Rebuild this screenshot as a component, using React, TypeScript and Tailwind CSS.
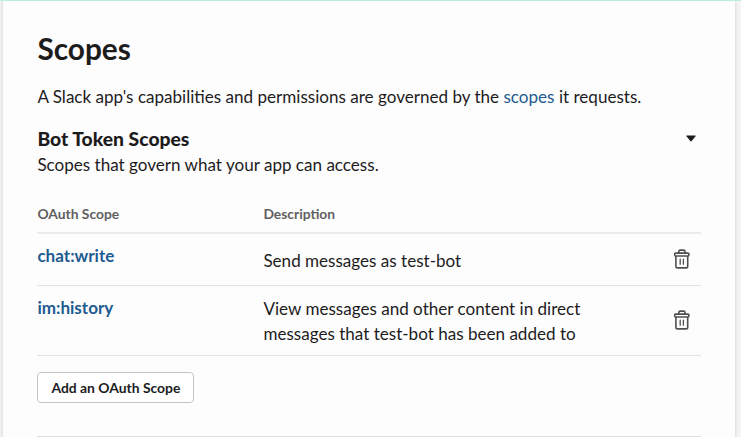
const scopes = [
  { name: "chat:write", lines: ["Send messages as test-bot"], row: "h-[52px]", cell: "pt-[13.5px] leading-[26px]" },
  {
    name: "im:history",
    lines: ["View messages and other content in direct", "messages that test-bot has been added to"],
    row: "h-[70px]",
    cell: "pt-[10px] leading-[25px]",
  },
];

function TrashIcon() {
  return (
    <svg width="18" height="20" viewBox="0 0 18 20" fill="none" stroke="#4f4f50" strokeWidth="1.6" strokeLinejoin="round">
      <path d="M5.8 3.9V2.6Q5.8 1.1 7.1 1.1h3.6Q12 1.1 12 2.6v1.3" />
      <rect x="1.7" y="4.1" width="14.2" height="2.9" rx="0.9" />
      <path d="M2.9 7v10.2q0 1.7 1.7 1.7h8.4q1.7 0 1.7-1.7V7" />
      <path d="M7.2 10.2v5M10.4 10.2v5" strokeWidth="1.3" strokeLinecap="round" />
    </svg>
  );
}

export default function App() {
  return (
    <div className="flex h-[437px] w-[741px] flex-col overflow-hidden border-t border-[#bdebdd] bg-[#f5f5f5] pl-[2px] pr-[5px] font-['Lato',sans-serif] text-[#1d1c1d]">
      <main className="flex-1 border-x border-[#e4e4e4] bg-[#fdfdfd] pl-[34.4px] pr-[34px] shadow-sm">
        <h1 className="mt-[28px] h-[40px] text-[29.8px] leading-[40px] font-bold">Scopes</h1>
        <p className="mt-[15px] h-[26px] whitespace-nowrap text-[17.07px] leading-[26px]">
          A Slack app's capabilities and permissions are governed by the <a className="text-[#1d5b91]">scopes</a> it requests.
        </p>
        <div className="mt-[16px] flex h-[26px] items-center justify-between pr-[5.5px]">
          <h2 className="text-[19.3px] leading-[26px] font-black">Bot Token Scopes</h2>
          <svg className="-mt-[2px]" width="10" height="7" viewBox="0 0 10 7"><path d="M.8.5h8.4q.8 0 .3.7L5.7 5.9Q5 6.7 4.3 5.9L.5 1.2Q0 .5.8.5Z" fill="#1d1c1d" /></svg>
        </div>
        <p className="h-[26px] text-[17.07px] leading-[26px]">Scopes that govern what your app can access.</p>
        <div className="mt-[22px] flex h-[34px] border-b-2 border-[#ebebeb] pt-[4px] text-[13.85px] leading-[20px] font-bold text-[#616061]">
          <div className="w-[226px]">OAuth Scope</div>
          <div>Description</div>
        </div>
        {scopes.map((s) => (
          <div key={s.name} className={`flex border-b border-[#e3e3e3] ${s.row}`}>
            <div className="w-[226px] pt-[9px] text-[17.07px] leading-[26px] font-bold text-[#1d5b91]">{s.name}</div>
            <div className={`flex-1 text-[17.07px] ${s.cell}`}>
              {s.lines.map((l) => <div key={l}>{l}</div>)}
            </div>
            <div className="flex items-center pr-[10px] pb-[2px]"><TrashIcon /></div>
          </div>
        ))}
        <button className="mt-[16px] block h-[31px] w-[157px] rounded-[4px] border border-[#c4c4c4] bg-white text-[13.9px] leading-[20px] font-bold">
          Add an OAuth Scope
        </button>
        <hr className="mt-[33px] border-[#e0e0e0]" />
      </main>
    </div>
  );
}
